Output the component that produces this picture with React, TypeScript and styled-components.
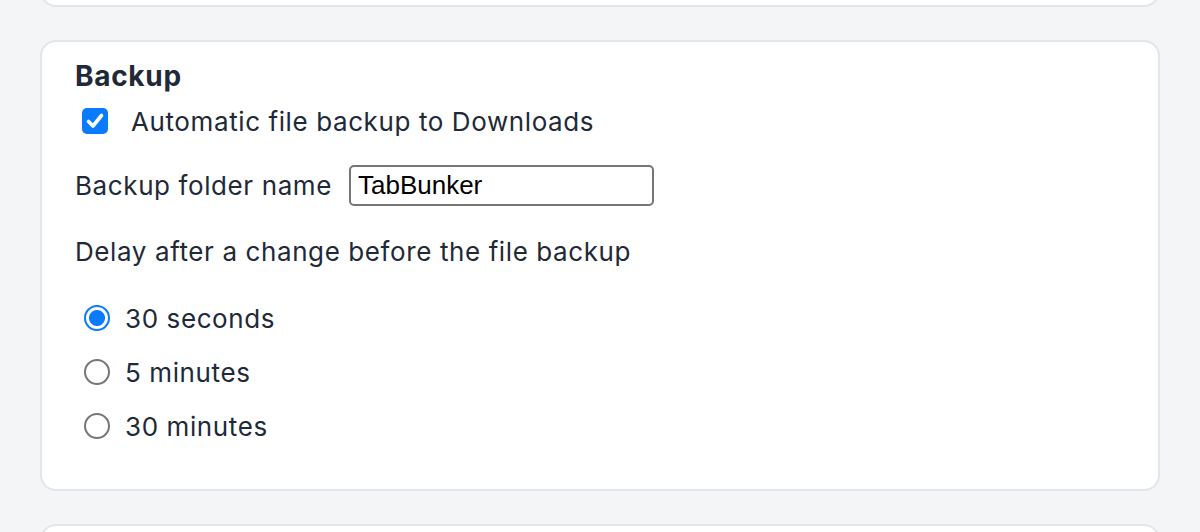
import React from "react";
import styled, { createGlobalStyle } from "styled-components";

const Global = createGlobalStyle`
  html, body { margin: 0; padding: 0; background: #f4f5f7; }
  body { font-family: Inter, "Noto Sans", sans-serif; color: #1f2937; }
  * { box-sizing: border-box; }
`;

const Page = styled.div`
  display: flex;
  flex-direction: column;
  gap: 33px;
  padding: 0 40px;
  height: 532px;
  overflow: hidden;
`;

const Card = styled.section<{ $stub?: "top" | "bottom" }>`
  background: #ffffff;
  border: 2px solid #e3e5e9;
  border-radius: 16px;
  flex-shrink: 0;
  ${(p) => (p.$stub === "top" ? "height: 60px; margin-top: -53px;" : "")}
  ${(p) => (p.$stub === "bottom" ? "height: 80px;" : "")}
`;

const Body = styled.div`
  display: flex;
  flex-direction: column;
  padding: 18px 32px 45px 33px;
  letter-spacing: 0.6px;
`;

const Title = styled.h2`
  margin: 0;
  font-size: 28px;
  line-height: 32px;
  font-weight: 700;
  letter-spacing: 0.7px;
  color: #1f2937;
`;

const Row = styled.label<{ $mt: number; $gap: number }>`
  display: flex;
  align-items: center;
  height: 36px;
  margin-top: ${(p) => p.$mt}px;
  gap: ${(p) => p.$gap}px;
  font-size: 26px;
  color: #1f2937;
`;

const Check = styled.span`
  width: 26px;
  height: 26px;
  margin-left: 7px;
  border-radius: 5px;
  background: #0a7aff;
  display: flex;
  align-items: center;
  justify-content: center;
  flex-shrink: 0;
`;

const Radio = styled.span<{ $on?: boolean }>`
  width: 26px;
  height: 26px;
  margin-left: 9px;
  border-radius: 50%;
  border: 2px solid ${(p) => (p.$on ? "#0a7aff" : "#767676")};
  background: ${(p) => (p.$on ? "radial-gradient(circle, #0a7aff 0 7.5px, #fff 8.5px)" : "#fff")};
  flex-shrink: 0;
`;

const FieldRow = styled.div`
  display: flex;
  align-items: center;
  gap: 17px;
  margin-top: 25px;
  height: 42px;
  font-size: 26px;
`;

const TextInput = styled.input`
  width: 305px;
  height: 41px;
  border: 2px solid #767676;
  border-radius: 5px;
  padding: 0 7px;
  font-family: "Liberation Sans", Arial, sans-serif;
  font-size: 26px;
  letter-spacing: 0;
  color: #000;
  background: #fff;
  outline: none;
`;

const Text = styled.div`
  margin-top: 30px;
  font-size: 26px;
  line-height: 32px;
`;

const RadioGroup = styled.div`
  display: flex;
  flex-direction: column;
  gap: 18px;
  margin-top: 32px;
`;

const options = ["30 seconds", "5 minutes", "30 minutes"];

export default function App() {
  return (
    <>
      <Global />
      <Page>
        <Card $stub="top" />
        <Card>
          <Body>
            <Title>Backup</Title>
            <Row $mt={11} $gap={23}>
              <Check>
                <svg width="22" height="22" viewBox="0 0 22 22">
                  <path d="M4.5 11.5 L9 16 L17.5 5.5" fill="none" stroke="#fff" strokeWidth="3.6" strokeLinecap="round" strokeLinejoin="round" />
                </svg>
              </Check>
              Automatic file backup to Downloads
            </Row>
            <FieldRow>
              <span>Backup folder name</span>
              <TextInput defaultValue="TabBunker" />
            </FieldRow>
            <Text>Delay after a change before the file backup</Text>
            <RadioGroup>
              {options.map((o, i) => (
                <Row key={o} $mt={0} $gap={15}>
                  <Radio $on={i === 0} />
                  {o}
                </Row>
              ))}
            </RadioGroup>
          </Body>
        </Card>
        <Card $stub="bottom" />
      </Page>
    </>
  );
}
